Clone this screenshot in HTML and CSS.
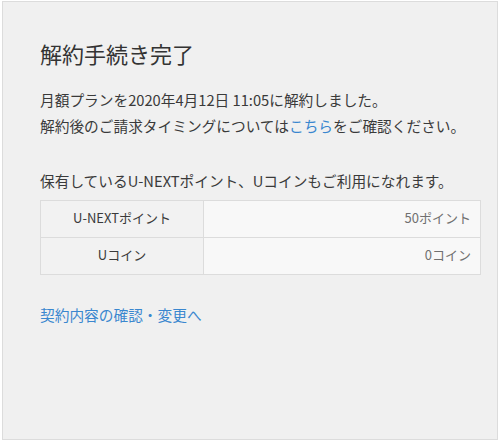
FILE: index.html
```html
<!DOCTYPE html>
<html lang="ja">
<head>
  <meta charset="UTF-8" />
  <title>解約手続き完了</title>
  <link rel="stylesheet" href="styles.css">
</head>
<body>
  <div class="page">
    <h1 class="title">解約手続き完了</h1>

    <p class="message">
      月額プランを2020年4月12日 11:05に解約しました。<br>
      解約後のご請求タイミングについては<a href="#">こちら</a>をご確認ください。
    </p>

    <p class="points-note">保有しているU-NEXTポイント、Uコインもご利用になれます。</p>

    <table class="points">
      <tr>
        <th>U-NEXTポイント</th>
        <td>50ポイント</td>
      </tr>
      <tr>
        <th>Uコイン</th>
        <td>0コイン</td>
      </tr>
    </table>

    <div class="contract-link">
      <a href="#">契約内容の確認・変更へ</a>
    </div>
  </div>
</body>
</html>
```

FILE: styles.css
```css
body {
  margin: 0;
  background-color: #ffffff;
  font-family: "Noto Sans CJK JP", "Noto Sans", sans-serif;
  color: #3a3a3a;
}

.page {
  margin: 1px 2px 2px 2px;
  height: 439px;
  box-sizing: border-box;
  border: 1px solid #dcdcdc;
  background-color: #f0f0f0;
  padding: 36px 0 0 37px;
}

.title {
  margin: 0;
  font-size: 22px;
  font-weight: normal;
  line-height: 30px;
  color: #333;
}

.message {
  margin: 19px 0 0;
  font-size: 14.7px;
  line-height: 26px;
}

.message a,
.contract-link a {
  color: #3a87cf;
  text-decoration: none;
}

.points-note {
  margin: 29px 0 0;
  font-size: 14.7px;
  line-height: 26px;
}

.points {
  margin-top: 6px;
  width: 441px;
  border-collapse: collapse;
  font-size: 13px;
}

.points th,
.points td {
  height: 33px;
  padding: 0 9px 3px;
  border: 1px solid #dcdcdc;
  font-weight: normal;
}

.points th {
  width: 144px;
  text-align: center;
  background-color: #f2f2f2;
  color: #3a3a3a;
}

.points td {
  text-align: right;
  background-color: #f8f8f8;
  color: #707070;
}

.contract-link {
  margin-top: 27px;
  font-size: 14.7px;
  line-height: 26px;
}
```
